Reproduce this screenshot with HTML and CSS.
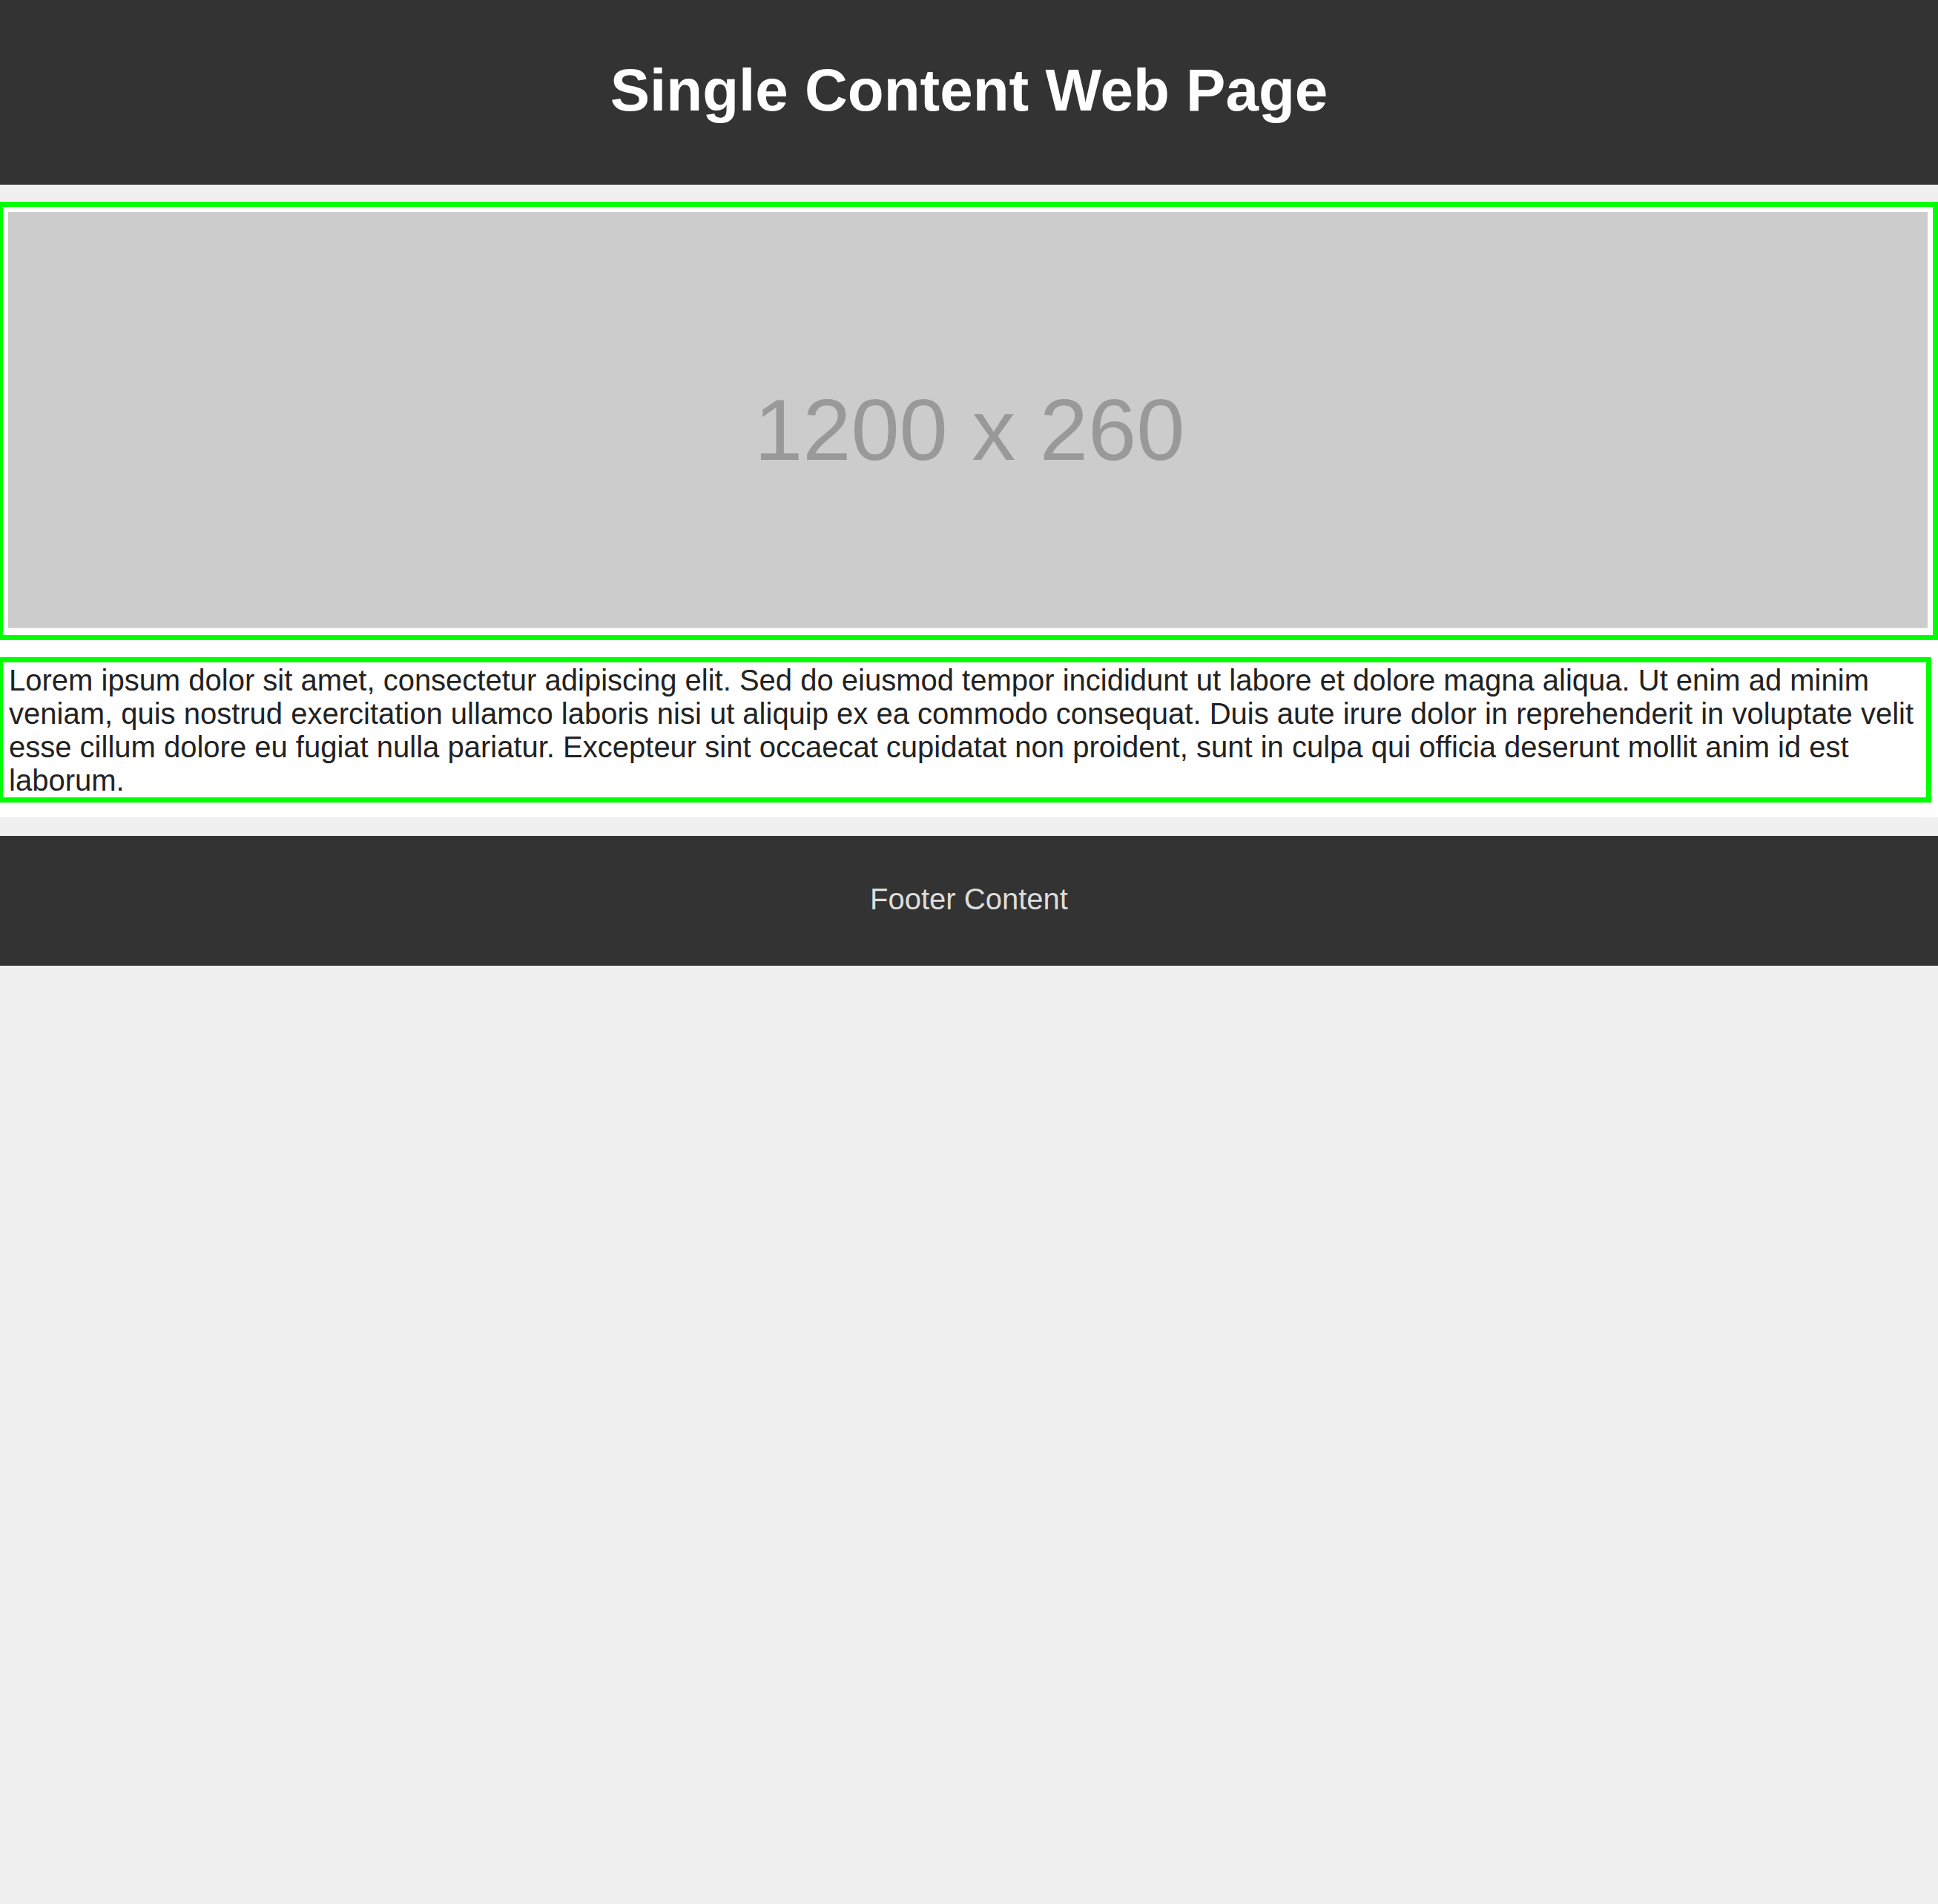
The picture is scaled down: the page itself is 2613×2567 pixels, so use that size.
FILE: index.html
```html
<!DOCTYPE html>
<html lang="en">
<head>
<meta charset="utf-8">
<title>Single Content Web Page</title>
<link rel="stylesheet" href="styles.css">
</head>
<body>
<header class="site-header">
  <h1 class="site-title">Single Content Web Page</h1>
</header>
<main class="content">
  <div class="hero">
    <svg class="hero-img" viewBox="0 0 1200 260" preserveAspectRatio="xMidYMid meet" role="img" aria-label="1200 x 260 placeholder">
      <rect x="0" y="0" width="1200" height="260" fill="#cccccc"/>
      <text x="601" y="154.8" text-anchor="middle" class="hero-label">1200 x 260</text>
    </svg>
  </div>
  <p class="text-box">Lorem ipsum dolor sit amet, consectetur adipiscing elit. Sed do eiusmod tempor incididunt ut labore et dolore magna aliqua. Ut enim ad minim veniam, quis nostrud exercitation ullamco laboris nisi ut aliquip ex ea commodo consequat. Duis aute irure dolor in reprehenderit in voluptate velit esse cillum dolore eu fugiat nulla pariatur. Excepteur sint occaecat cupidatat non proident, sunt in culpa qui officia deserunt mollit anim id est laborum.</p>
</main>
<footer class="site-footer">
  <p class="footer-text">Footer Content</p>
</footer>
</body>
</html>
```
FILE: styles.css
```css
html, body {
  margin: 0;
  padding: 0;
}

body {
  background: #f0f0f0;
  font-family: "Liberation Sans", Arial, sans-serif;
  overflow-x: hidden;
}

.site-header {
  background: #333333;
  height: 249px;
  box-sizing: border-box;
  padding-top: 76px;
  text-align: center;
}

.site-title {
  margin: 0;
  color: #ffffff;
  font-size: 80px;
  font-weight: bold;
  line-height: 92px;
}

.content {
  background: #ffffff;
  margin-top: 23px;
  padding-bottom: 20px;
}

.hero {
  margin: 0 0 0 -3px;
  border: 7px solid #00ff00;
  padding: 7px 7px 9px 7px;
  background: #ffffff;
}

.hero-img {
  display: block;
  width: 100%;
  height: auto;
}

.hero-label {
  font-family: "Liberation Sans", Arial, sans-serif;
  font-size: 54.4px;
  fill: #999999;
}

.text-box {
  margin: 23px 9px 0 -3px;
  border: 7px solid #00ff00;
  padding: 2px 3px 0 8px;
  color: #222222;
  font-size: 40px;
  line-height: 45px;
}

.site-footer {
  background: #333333;
  margin-top: 25px;
  height: 175px;
  box-sizing: border-box;
  padding-top: 62px;
  text-align: center;
}

.footer-text {
  margin: 0;
  color: #dddddd;
  font-size: 40px;
  line-height: 46px;
}
```
